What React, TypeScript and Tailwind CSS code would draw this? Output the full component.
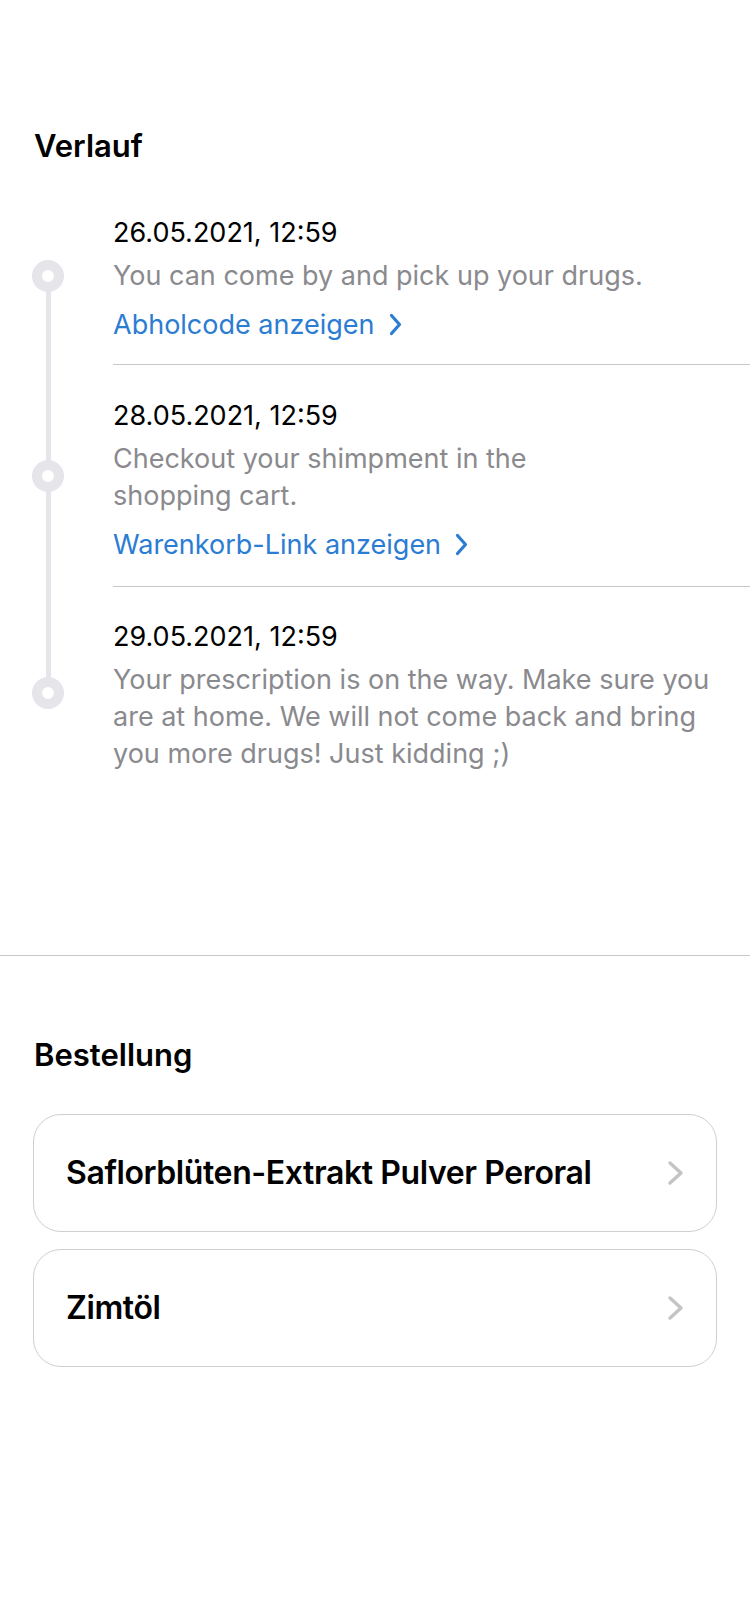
import React from "react";

function LinkChevron() {
  return (
    <svg width="13" height="23" viewBox="0 0 13 23" className="ml-[14px] shrink-0" fill="none">
      <path d="M2.5 2.5 L10.5 11.5 L2.5 20.5" stroke="#2B7CD3" strokeWidth="3.2" strokeLinecap="round" strokeLinejoin="round" />
    </svg>
  );
}

function CardChevron() {
  return (
    <svg width="17" height="26" viewBox="0 0 17 26" fill="none" className="shrink-0">
      <path d="M3 3 L14 13 L3 23" stroke="#C4C4C7" strokeWidth="3.4" strokeLinecap="round" strokeLinejoin="round" />
    </svg>
  );
}

type Item = {
  date: string;
  lines: string[];
  link?: string;
  pt: string;
  pb: string;
};

const items: Item[] = [
  {
    date: "26.05.2021, 12:59",
    lines: ["You can come by and pick up your drugs."],
    link: "Abholcode anzeigen",
    pt: "pt-[28px]",
    pb: "pb-[21px]",
  },
  {
    date: "28.05.2021, 12:59",
    lines: ["Checkout your shimpment in the", "shopping cart."],
    link: "Warenkorb-Link anzeigen",
    pt: "pt-[32px]",
    pb: "pb-[23px]",
  },
  {
    date: "29.05.2021, 12:59",
    lines: [
      "Your prescription is on the way. Make sure you",
      "are at home. We will not come back and bring",
      "you more drugs! Just kidding ;)",
    ],
    pt: "pt-[31px]",
    pb: "pb-[26px]",
  },
];

export default function App() {
  return (
    <div className="w-[750px] min-h-[1624px] bg-white font-['Inter','Noto_Sans',sans-serif] text-black">
      <div className="pt-[128px]">
        <h2 className="pl-[34px] text-[31px] leading-[36px] font-semibold">Verlauf</h2>
        <div className="mt-[22px] flex flex-col">
          {items.map((it, i) => {
            const first = i === 0;
            const last = i === items.length - 1;
            return (
              <div key={i} className="flex">
                <div className="w-[113px] shrink-0 pl-[32px] flex">
                  <div className="w-[32px] flex flex-col items-center">
                    <div className={`flex-1 w-[5px] ${first ? "" : "bg-[#E5E5EA]"}`} />
                    <div className="w-[32px] h-[32px] rounded-full border-[10px] border-[#E5E5EA] bg-white shrink-0" />
                    <div className={`flex-1 w-[5px] ${last ? "" : "bg-[#E5E5EA]"}`} />
                  </div>
                </div>
                <div className={`flex-1 ${it.pt} ${it.pb} ${last ? "" : "border-b border-[#C8C8CC]"}`}>
                  <div className="text-[27px] leading-[37px]">{it.date}</div>
                  <div className="mt-[6px] text-[27px] leading-[37px] text-[#8A8A8E]">
                    {it.lines.map((l, j) => (
                      <div key={j} className="whitespace-nowrap">{l}</div>
                    ))}
                  </div>
                  {it.link && (
                    <div className="mt-[12px] flex items-center text-[27px] leading-[37px] text-[#2B7CD3]">
                      <span>{it.link}</span>
                      <LinkChevron />
                    </div>
                  )}
                </div>
              </div>
            );
          })}
        </div>
        <div className="mt-[157px] border-t border-[#C8C8CC]" />
        <h2 className="mt-[81px] pl-[34px] text-[31px] leading-[36px] font-semibold">Bestellung</h2>
        <div className="mt-[41px] px-[33px] flex flex-col gap-[17px]">
          {["Saflorblüten-Extrakt Pulver Peroral", "Zimtöl"].map((t) => (
            <div
              key={t}
              className="h-[118px] rounded-[28px] border border-[#CFCFD3] flex items-center justify-between pl-[32px] pr-[32px]"
            >
              <span className="text-[32px] font-semibold tracking-[-0.4px]">{t}</span>
              <CardChevron />
            </div>
          ))}
        </div>
      </div>
    </div>
  );
}
